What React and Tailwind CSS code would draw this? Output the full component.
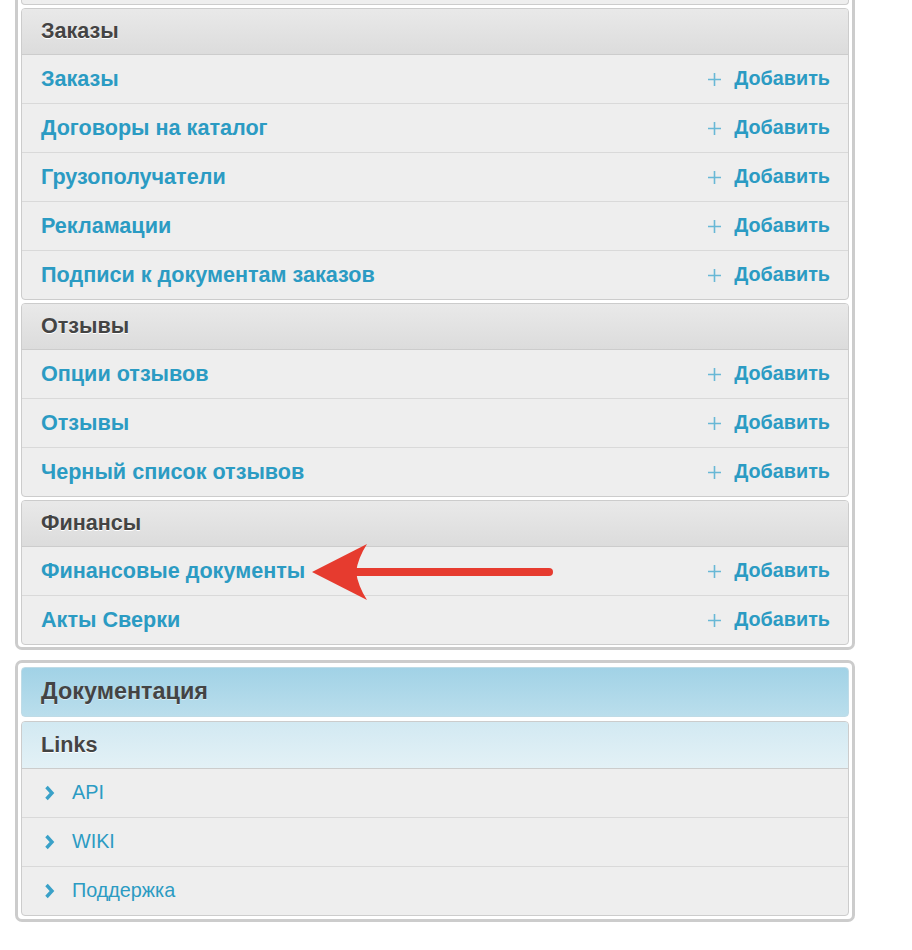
import React from "react";

const LINK = "text-[#2b9bc3]";

function PlusIcon() {
  return (
    <svg width="15" height="15" viewBox="0 0 15 15" className="shrink-0">
      <path d="M7.5 1 V14 M1 7.5 H14" stroke="#68b8d6" strokeWidth="1.6" fill="none" />
    </svg>
  );
}

function Chevron() {
  return (
    <svg width="11" height="16" viewBox="0 0 11 16" className="shrink-0">
      <path d="M2.5 2 L8 8 L2.5 14" stroke="#3aa1c8" strokeWidth="3.4" fill="none" strokeLinejoin="miter" />
    </svg>
  );
}

function Module({ title, rows, lastShort }) {
  return (
    <div className="border border-[#cccccc] rounded-[4px] overflow-hidden bg-[#eeeeee]">
      <div className="h-[46px] flex items-center px-[19px] bg-gradient-to-b from-[#e9e9e9] to-[#dcdcdc] border-b border-[#cccccc]">
        <span className="text-[21.6px] font-bold text-[#444444] [text-shadow:0_1px_0_#ffffff]">{title}</span>
      </div>
      {rows.map((r, i) => (
        <div
          key={r}
          className={
            "flex items-center justify-between pl-[19px] pr-[18px] " +
            (i > 0 ? "h-[49px] border-t border-[#d9d9d9]" : "h-[48px]")
          }
        >
          <span className={"text-[21.6px] font-bold " + LINK}>{r}</span>
          <span className="flex items-center gap-[12px]">
            <PlusIcon />
            <span className={"text-[19.8px] font-bold " + LINK}>Добавить</span>
          </span>
        </div>
      ))}
    </div>
  );
}

export default function App() {
  return (
    <div
      className="relative w-[912px] h-[950px] bg-white overflow-hidden"
      style={{ fontFamily: '"Liberation Sans", Arial, sans-serif' }}
    >
      <div className="pl-[15px]">
        {/* First outer box (top cut off) */}
        <div className="w-[840px] border-[3px] border-t-0 border-[#cccccc] rounded-b-[7px] px-[3px] pb-[2px] flex flex-col gap-[3px]">
          <div className="h-[5px] border border-t-0 border-[#cccccc] rounded-b-[4px] bg-[#eeeeee]" />
          <Module
            title="Заказы"
            rows={[
              "Заказы",
              "Договоры на каталог",
              "Грузополучатели",
              "Рекламации",
              "Подписи к документам заказов",
            ]}
          />
          <Module title="Отзывы" rows={["Опции отзывов", "Отзывы", "Черный список отзывов"]} />
          <Module title="Финансы" rows={["Финансовые документы", "Акты Сверки"]} />
        </div>

        {/* Second outer box */}
        <div className="mt-[10px] w-[840px] border-[3px] border-[#cccccc] rounded-[7px] px-[3px] pt-[4px] pb-[3px] flex flex-col gap-[4px]">
          <div className="h-[50px] flex items-center px-[19px] rounded-[4px] border border-[#bfdbe6] bg-gradient-to-b from-[#a1d2e6] to-[#badeec]">
            <span className="text-[23.4px] font-bold text-[#444444] [text-shadow:0_1px_0_rgba(255,255,255,0.5)]">
              Документация
            </span>
          </div>
          <div className="border border-[#cccccc] rounded-[4px] overflow-hidden bg-[#eeeeee]">
            <div className="h-[47px] flex items-center px-[19px] bg-gradient-to-b from-[#d2e9f2] to-[#e3f1f6] border-b border-[#cccccc]">
              <span className="text-[21.6px] font-bold text-[#444444] [text-shadow:0_1px_0_#ffffff]">Links</span>
            </div>
            {["API", "WIKI", "Поддержка"].map((r, i) => (
              <div
                key={r}
                className={
                  "flex items-center pl-[22px] gap-[17px] " +
                  (i > 0 ? "h-[49px] border-t border-[#d9d9d9]" : "h-[48px]")
                }
              >
                <Chevron />
                <span className={"text-[19.8px] " + LINK}>{r}</span>
              </div>
            ))}
          </div>
        </div>
      </div>

      {/* Red annotation arrow */}
      <svg
        className="absolute left-0 top-0 pointer-events-none"
        width="912"
        height="950"
        viewBox="0 0 912 950"
      >
        <line x1="352" y1="572" x2="549" y2="572" stroke="#e63b2f" strokeWidth="8" strokeLinecap="round" />
        <path d="M312 572 L367 544 Q358 558 356 572 Q358 586 367 600 Z" fill="#e63b2f" />
      </svg>
    </div>
  );
}
